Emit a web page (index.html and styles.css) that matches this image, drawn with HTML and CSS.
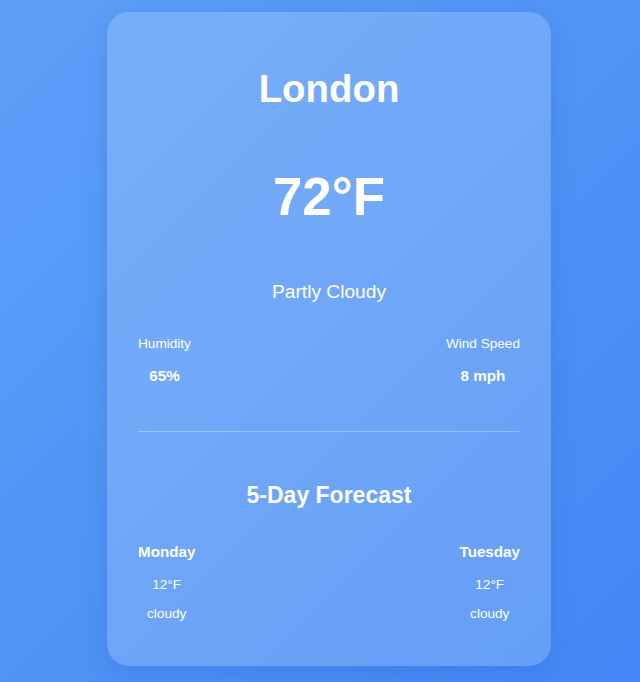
FILE: index.html
```html
<!DOCTYPE html>
<html lang="en">
<head>
<meta charset="utf-8">
<title>Weather</title>
<link rel="stylesheet" href="styles.css">
</head>
<body>
<div class="card">
  <h1 class="city">London</h1>
  <div class="temp">72°F</div>
  <div class="cond">Partly Cloudy</div>
  <div class="stats">
    <div class="stat">
      <div class="stat-label">Humidity</div>
      <div class="stat-value">65%</div>
    </div>
    <div class="stat">
      <div class="stat-label">Wind Speed</div>
      <div class="stat-value">8 mph</div>
    </div>
  </div>
  <hr class="divider">
  <h2 class="forecast-title">5-Day Forecast</h2>
  <div class="forecast">
    <div class="day">
      <div class="day-name">Monday</div>
      <div class="day-temp">12°F</div>
      <div class="day-cond">cloudy</div>
    </div>
    <div class="day">
      <div class="day-name">Tuesday</div>
      <div class="day-temp">12°F</div>
      <div class="day-cond">cloudy</div>
    </div>
  </div>
</div>
</body>
</html>
```
FILE: styles.css
```css
html, body {
  margin: 0;
  padding: 0;
}
body {
  min-height: 682px;
  box-sizing: border-box;
  padding-top: 12px;
  background: linear-gradient(135deg, #5ea0f8 0%, #4287f5 100%);
  font-family: "Liberation Sans", Arial, sans-serif;
  color: #fff;
}
.card {
  width: 444px;
  box-sizing: border-box;
  margin-left: 107px;
  padding: 55px 31px 44px;
  border-radius: 22px;
  background: rgba(255, 255, 255, 0.18);
  box-shadow: 0 6px 24px rgba(0, 40, 120, 0.12);
  text-align: center;
}
.city {
  margin: 0;
  font-size: 38.4px;
  line-height: 1.15;
  font-weight: 700;
}
.temp {
  margin-top: 56px;
  font-size: 52.8px;
  line-height: 1.15;
  font-weight: 700;
}
.cond {
  margin-top: 53.5px;
  font-size: 19.2px;
  line-height: 1.15;
}
.stats {
  margin-top: 33px;
  display: flex;
  justify-content: space-between;
}
.stat-label {
  font-size: 13.6px;
  line-height: 1.15;
}
.stat-value {
  margin-top: 14.6px;
  font-size: 15.2px;
  line-height: 1.15;
  font-weight: 700;
}
.divider {
  margin: 47px 0 0;
  border: 0;
  height: 1px;
  background: rgba(255, 255, 255, 0.3);
}
.forecast-title {
  margin: 50px 0 0;
  font-size: 23px;
  line-height: 1.15;
  font-weight: 700;
}
.forecast {
  margin-top: 34.4px;
  display: flex;
  justify-content: space-between;
}
.day-name {
  font-size: 15.2px;
  line-height: 1.15;
  font-weight: 700;
}
.day-temp {
  margin-top: 17px;
  font-size: 13.6px;
  line-height: 1.15;
}
.day-cond {
  margin-top: 13.4px;
  font-size: 13.6px;
  line-height: 1.15;
}
```
